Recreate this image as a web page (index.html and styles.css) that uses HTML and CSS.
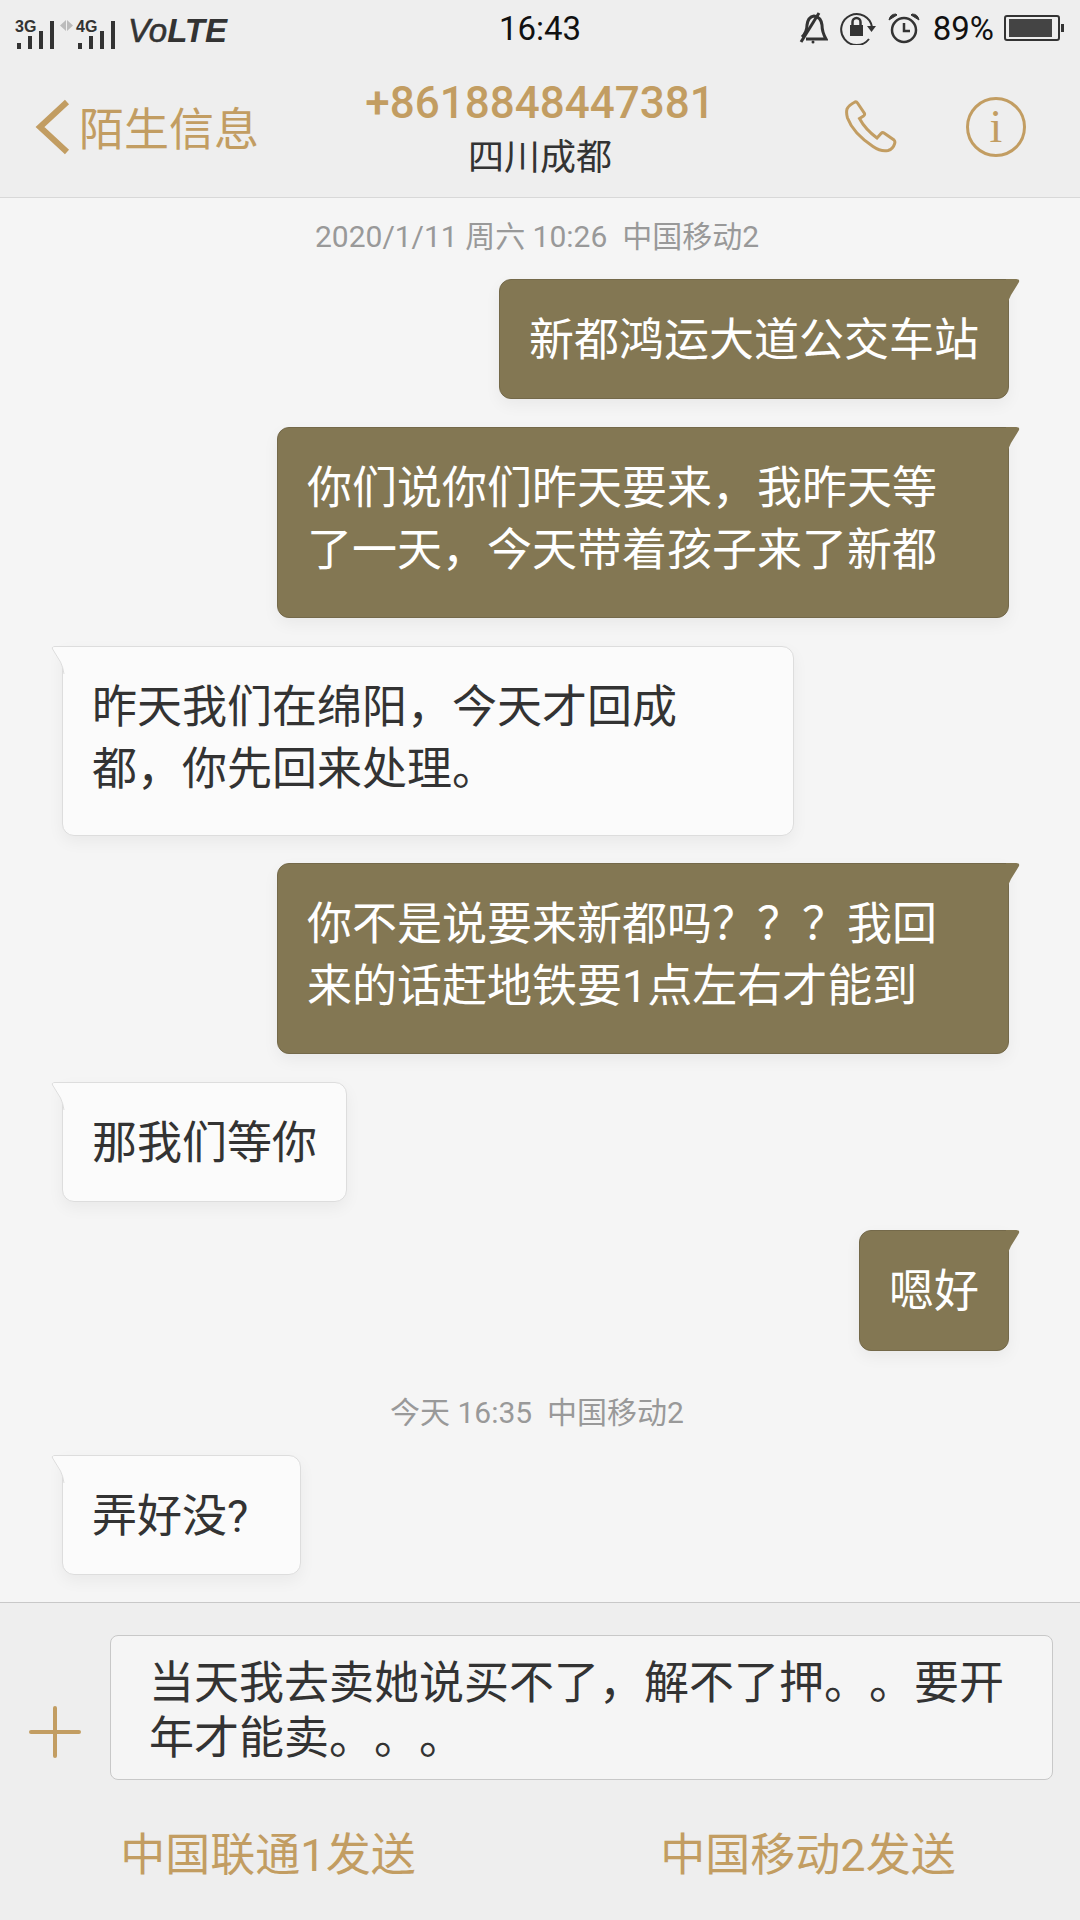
FILE: index.html

```html
<!DOCTYPE html>
<html lang="zh-CN">
<head>
    <meta charset="UTF-8">
    <meta name="viewport" content="width=device-width, initial-scale=1.0">
    <title>陌生信息</title>
    <link rel="stylesheet" href="styles.css">
</head>
<body>
    <svg class="defs" width="0" height="0">
        <symbol id="tail-out" viewBox="0 0 14 28">
            <path d="M0 0H10Q14 0 13 3L5 16Q2 21 1 28H0Z" fill="#837753"/>
        </symbol>
        <symbol id="tail-in" viewBox="0 0 14 28">
            <path d="M14 0H4Q0 0 1 3L9 16Q12 21 13 28H14Z" fill="#fbfbfb"/>
            <path d="M14 .5H4Q.5 .5 1.500 3L9.500 16Q12 21 13 28" fill="none" stroke="#ddd"/>
        </symbol>
    </svg>

    <div class="top">
        <div class="status">
            <div class="status-left">
                <svg class="signal" width="116" height="44" viewBox="0 0 116 44">
                    <text x="15" y="24" class="net">3G</text>
                    <path d="M17 35h4v6h-4zM28 28h4v13h-4zM39 23h4v18h-4zM50 13h4v28h-4z" fill="#333"/>
                    <path d="M66 12v11l-6-5.500zM67 12v11l6-5.500z" fill="#bbb"/>
                    <text x="76" y="24" class="net">4G</text>
                    <path d="M78 35h4v6h-4zM89 28h4v13h-4zM100 23h4v18h-4zM111 13h4v28h-4z" fill="#333"/>
                </svg>
                <div class="volte"><span class="vo">Vo</span><b>LTE</b></div>
            </div>
            <div class="clock">16:43</div>
            <div class="status-right">
                <svg width="30" height="32" viewBox="0 0 30 32" fill="none" stroke="#333" stroke-width="3">
                    <path d="M4 25Q9 20 9 13Q10 5 16 4Q23 5 24 13Q24 20 28 27H8"/>
                    <path d="M21 1L3 30"/>
                    <circle cx="15" cy="30" r="1.500" fill="#333" stroke="none"/>
                </svg>
                <svg class="lock" width="38" height="34" viewBox="0 0 38 34" fill="none" stroke="#333" stroke-width="2">
                    <path d="M33 16A15.500 15.500 0 1 0 30 28"/>
                    <path d="M28 15h9l-4.500 6z" fill="#333" stroke="none"/>
                    <path d="M11 14h13v11h-13z" fill="#333" stroke="none"/>
                    <path d="M13.500 14v-3a4 4 0 0 1 8 0v3" stroke-width="2.500"/>
                </svg>
                <svg class="alarm" width="32" height="31" viewBox="0 0 32 31" fill="none" stroke="#333" stroke-width="2.500">
                    <circle cx="16" cy="17" r="12"/>
                    <path d="M16 10v8h6"/>
                    <path d="M1 7Q2 1 8 1l1 1zM31 7Q30 1 24 1l-1 1z" fill="#333" stroke-width="1"/>
                </svg>
                <div class="pct">89%</div>
                <svg class="battery" width="60" height="26" viewBox="0 0 60 26">
                    <rect x="1" y="1" width="54" height="24" rx="2" fill="none" stroke="#333" stroke-width="2"/>
                    <rect x="5" y="4" width="43" height="18" fill="#444"/>
                    <rect x="57" y="9" width="3" height="8" fill="#333"/>
                </svg>
            </div>
        </div>

        <header class="nav">
            <div class="back">
                <svg width="36" height="56" viewBox="0 0 36 56" fill="none" stroke="#c29d62" stroke-width="6">
                    <path d="M32 3L5 28L32 53"/>
                </svg>
                <span>陌生信息</span>
            </div>
            <div class="title">
                <div class="number">+8618848447381</div>
                <div class="place">四川成都</div>
            </div>
            <div class="actions">
                <svg width="52" height="53" viewBox="0 0 52 53" fill="none" stroke="#c29d62" stroke-width="3">
                    <path d="M2 9Q4 5 10 2Q11.500 1.500 12.500 3L19.500 13.500Q20 15 18.500 16L14.500 18.500Q20 29 32 38L36 33.500Q37.500 32 39 33L49 40Q50.500 41.500 49.500 44Q48 49 43 50.500Q36 52 28 46.500Q8 33 2.500 18Q1 13 2 9Z"/>
                </svg>
                <svg width="60" height="60" viewBox="0 0 60 60">
                    <circle cx="30" cy="30" r="28.500" fill="none" stroke="#c29d62" stroke-width="3"/>
                    <text x="30" y="45" class="info-i">i</text>
                </svg>
            </div>
        </header>
    </div>

    <main class="thread">
        <div class="stamp first">2020/1/11 周六 10:26&nbsp;&nbsp;中国移动2</div>

        <div class="msg out">新都鸿运大道公交车站<svg class="tail"><use href="#tail-out"/></svg></div>
        <div class="msg out multi">你们说你们昨天要来，我昨天等了一天，今天带着孩子来了新都<svg class="tail"><use href="#tail-out"/></svg></div>
        <div class="msg in multi">昨天我们在绵阳，今天才回成都，你先回来处理。<svg class="tail"><use href="#tail-in"/></svg></div>
        <div class="msg out multi">你不是说要来新都吗？？？我回来的话赶地铁要1点左右才能到<svg class="tail"><use href="#tail-out"/></svg></div>
        <div class="msg in">那我们等你<svg class="tail"><use href="#tail-in"/></svg></div>
        <div class="msg out tall">嗯好<svg class="tail"><use href="#tail-out"/></svg></div>

        <div class="stamp">今天 16:35&nbsp;&nbsp;中国移动2</div>

        <div class="msg in">弄好没?&nbsp;&nbsp;<svg class="tail"><use href="#tail-in"/></svg></div>
    </main>

    <footer class="bottom">
        <div class="composer">
            <svg class="plus" width="52" height="52" viewBox="0 0 52 52" stroke="#c29d62" stroke-width="4" stroke-linecap="round">
                <path d="M26 2V50M2 26H50"/>
            </svg>
            <div class="input">当天我去卖她说买不了，解不了押。。要开年才能卖。。。</div>
        </div>
        <div class="send">
            <div class="send-btn">中国联通1发送</div>
            <div class="send-btn">中国移动2发送</div>
        </div>
    </footer>
</body>
</html>
```

FILE: styles.css

```css
* {
    box-sizing: border-box;
}
body {
    margin: 0;
    width: 1080px;
    height: 1920px;
    display: flex;
    flex-direction: column;
    overflow: hidden;
    background-color: #f5f5f5;
    font-family: Roboto, "Noto Sans CJK SC", sans-serif;
    color: #333;
    text-spacing-trim: space-all;
}
.defs {
    display: block;
    height: 0;
}

/* status bar + nav */
.top {
    background-color: #eeeeee;
    border-bottom: 1px solid #d8d8d8;
}
.status {
    height: 56px;
    display: grid;
    grid-template-columns: 1fr auto 1fr;
    align-items: center;
}
.status-left {
    display: flex;
    align-items: center;
}
.signal {
    flex: none;
    margin-top: 4px;
}
.net {
    font-family: "Liberation Sans", sans-serif;
    font-size: 16px;
    font-weight: 700;
    fill: #333;
}
.volte {
    margin: 5px 0 0 12px;
    font-family: "Liberation Sans", sans-serif;
    font-size: 33px;
    font-style: italic;
    color: #333;
}
.vo {
    -webkit-text-stroke: 0.6px #333;
}
.clock {
    font-size: 33px;
    color: #111;
}
.status-right {
    display: flex;
    align-items: center;
    justify-content: flex-end;
    padding-right: 16px;
}
.status-right svg {
    flex: none;
}
.lock {
    margin-left: 11px;
}
.alarm {
    margin-left: 11px;
}
.pct {
    margin-left: 13px;
    font-size: 33px;
    color: #111;
}
.battery {
    margin-left: 10px;
}

.nav {
    height: 141px;
    display: grid;
    grid-template-columns: 1fr auto 1fr;
    align-items: center;
}
.back {
    display: flex;
    align-items: center;
    gap: 8px;
    padding-left: 35px;
    font-size: 45px;
    color: #c29d62;
}
.title {
    text-align: center;
    padding-top: 5px;
}
.number {
    font-size: 44px;
    font-weight: 500;
    line-height: 52px;
    color: #c29d62;
}
.place {
    margin-top: 5px;
    font-size: 36px;
    line-height: 48px;
    color: #333;
}
.actions {
    display: flex;
    align-items: center;
    justify-content: flex-end;
    gap: 69px;
    padding-right: 54px;
}
.info-i {
    font-family: "Liberation Serif", serif;
    font-size: 46px;
    text-anchor: middle;
    fill: #c29d62;
}

/* messages */
.thread {
    flex: 1;
    min-height: 0;
    display: flex;
    flex-direction: column;
    gap: 28px;
    padding: 0 71px 0 62px;
}
.stamp {
    text-align: center;
    font-size: 30px;
    line-height: 40px;
    color: #999;
    margin: 14px 0 -6px;
    padding-left: 3px;
}
.stamp.first {
    margin: 19px 0 -6px;
}
.msg {
    position: relative;
    max-width: 732px;
    padding: 30px 29px 26px;
    font-size: 45px;
    line-height: 62px;
    border-radius: 12px;
    box-shadow: 0 6px 16px rgba(0, 0, 0, 0.05);
}
.multi {
    padding-bottom: 35px;
}
.tall {
    padding-bottom: 27px;
}
.out {
    align-self: flex-end;
    background-color: #837753;
    color: #fff;
    border: 1px solid #74694a;
    border-top-right-radius: 0;
}
.in {
    align-self: flex-start;
    background-color: #fbfbfb;
    border: 1px solid #ddd;
    border-top-left-radius: 0;
}
.in.multi {
    padding-bottom: 34px;
    margin-bottom: -1px;
}
.tail {
    position: absolute;
    top: -1px;
    width: 14px;
    height: 28px;
}
.out .tail {
    right: -12px;
}
.in .tail {
    left: -12px;
}

/* composer */
.bottom {
    height: 318px;
    background-color: #eeeeee;
    border-top: 1px solid #c8c8c8;
}
.composer {
    display: flex;
    padding: 32px 27px 0 29px;
}
.plus {
    flex: none;
    align-self: flex-end;
    margin: 0 29px 22px 0;
}
.input {
    flex: 1;
    height: 145px;
    padding: 20px 30px 0 38px;
    font-size: 45px;
    line-height: 55px;
    background-color: #f5f5f5;
    border: 1px solid #c8c8c8;
    border-radius: 8px;
}
.send {
    display: flex;
    margin: 41px 2px 0 -2px;
}
.send-btn {
    flex: 1;
    text-align: center;
    font-size: 45px;
    line-height: 70px;
    color: #c29d62;
}
```
